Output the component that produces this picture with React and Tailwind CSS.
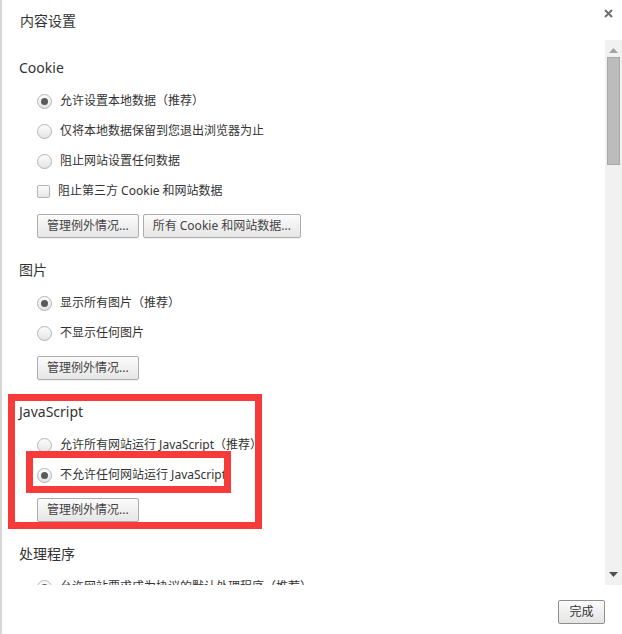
import React from 'react';

const Radio = ({ checked }) => (
  <span className="w-[15px] h-[15px] rounded-full border border-[#b4b4b4] bg-gradient-to-b from-[#fdfdfd] to-[#e4e4e4] flex items-center justify-center shrink-0">
    {checked && <span className="w-[7px] h-[7px] rounded-full bg-[#5a5a5a]" />}
  </span>
);

const Checkbox = () => (
  <span className="w-[13px] h-[13px] rounded-[2px] border border-[#b4b4b4] bg-gradient-to-b from-[#fdfdfd] to-[#e6e6e6] shrink-0" />
);

const Button = ({ children }) => (
  <button className="h-[24px] px-[9px] rounded-[2px] border border-[#adadad] bg-gradient-to-b from-[#fbfbfb] to-[#e6e6e6] text-[12px] leading-none text-[#444] shadow-[0_1px_0_rgba(0,0,0,0.06)]">
    {children}
  </button>
);

const Option = ({ type = 'radio', checked, label }) => (
  <div className="h-[30px] flex items-center">
    {type === 'radio' ? <Radio checked={checked} /> : <Checkbox />}
    <span className="ml-[8px] text-[12px] text-[#333] whitespace-nowrap">{label}</span>
  </div>
);

const Section = ({ title, options, buttons, first }) => (
  <div className={first ? 'mt-[18px]' : 'mt-[22px]'}>
    <div className="h-[20px] leading-[20px] text-[14px] text-[#333]">{title}</div>
    <div className="mt-[8px] pl-[18px]">
      {options.map((o) => (
        <Option key={o.label} {...o} />
      ))}
      {buttons && (
        <div className="mt-[8px] flex gap-[4px]">
          {buttons.map((b) => (
            <Button key={b}>{b}</Button>
          ))}
        </div>
      )}
    </div>
  </div>
);

const sections = [
  {
    title: 'Cookie',
    options: [
      { checked: true, label: '允许设置本地数据（推荐）' },
      { label: '仅将本地数据保留到您退出浏览器为止' },
      { label: '阻止网站设置任何数据' },
      { type: 'checkbox', label: '阻止第三方 Cookie 和网站数据' },
    ],
    buttons: ['管理例外情况...', '所有 Cookie 和网站数据...'],
  },
  {
    title: '图片',
    options: [
      { checked: true, label: '显示所有图片（推荐）' },
      { label: '不显示任何图片' },
    ],
    buttons: ['管理例外情况...'],
  },
  {
    title: 'JavaScript',
    options: [
      { label: '允许所有网站运行 JavaScript（推荐）' },
      { checked: true, label: '不允许任何网站运行 JavaScript' },
    ],
    buttons: ['管理例外情况...'],
  },
  {
    title: '处理程序',
    options: [{ checked: true, label: '允许网站要求成为协议的默认处理程序（推荐）' }],
  },
];

export default function App() {
  return (
    <div className="relative w-[622px] h-[634px] bg-white flex overflow-hidden font-['Noto_Sans','Noto_Sans_CJK_SC',sans-serif]">
      <div className="w-[2px] bg-[#d6d6d6]" />
      <div className="flex-1 flex flex-col">
        {/* header */}
        <div className="h-[40px] flex items-center justify-between pl-[18px] pr-[9px]">
          <span className="text-[14px] text-[#333]">内容设置</span>
          <svg width="9" height="9" viewBox="0 0 9 9" className="mb-[13px]">
            <path d="M1 1L8 8M8 1L1 8" stroke="#707070" strokeWidth="2" />
          </svg>
        </div>

        {/* scroll area */}
        <div className="h-[545px] flex">
          <div className="flex-1 overflow-hidden pl-[17px]">
            {sections.map((s, i) => (
              <Section key={s.title} first={i === 0} {...s} />
            ))}
          </div>
          <div className="w-[17px] bg-[#f1f1f1] flex flex-col items-center">
            <svg width="9" height="5" viewBox="0 0 9 5" className="mt-[8px]">
              <path d="M0 5L4.5 0L9 5Z" fill="#a3a3a3" />
            </svg>
            <div className="mt-[4px] w-[13px] h-[108px] bg-[#bcbcbc] border border-[#a8a8a8]" />
            <div className="flex-1" />
            <svg width="9" height="5" viewBox="0 0 9 5" className="mb-[8px]">
              <path d="M0 0L9 0L4.5 5Z" fill="#505050" />
            </svg>
          </div>
        </div>

        {/* footer */}
        <div className="flex-1 flex justify-end items-start pt-[15px] pr-[17px]">
          <button className="h-[24px] w-[47px] rounded-[2px] border border-[#8f8f8f] bg-gradient-to-b from-[#fbfbfb] to-[#e4e4e4] text-[12px] leading-none text-[#333]">
            完成
          </button>
        </div>
      </div>

      {/* red annotation boxes */}
      <div className="absolute left-[8px] top-[394px] w-[254px] h-[135px] border-[7px] border-[#f73b3b]" />
      <div className="absolute left-[26px] top-[451px] w-[205px] h-[42px] border-[7px] border-[#f73b3b]" />
    </div>
  );
}
